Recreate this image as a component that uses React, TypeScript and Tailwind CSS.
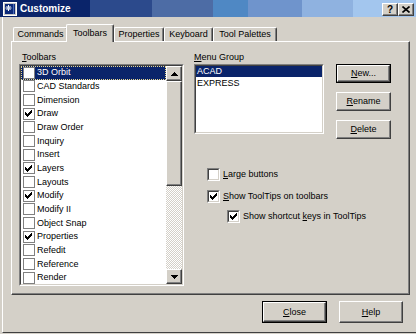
import React from "react";

const items: [string, boolean][] = [
  ["3D Orbit", false],
  ["CAD Standards", false],
  ["Dimension", false],
  ["Draw", true],
  ["Draw Order", false],
  ["Inquiry", false],
  ["Insert", false],
  ["Layers", true],
  ["Layouts", false],
  ["Modify", true],
  ["Modify II", false],
  ["Object Snap", false],
  ["Properties", true],
  ["Refedit", false],
  ["Reference", false],
  ["Render", false],
];

function CheckMark() {
  return (
    <svg width="8" height="7" viewBox="0 0 8 7">
      <path d="M0 2h1v1h1v1h1V3h1V2h1V1h1V0h1v3H6v1H5v1H4v1H3v1H2V6H1V5H0z" fill="#000" />
    </svg>
  );
}

function TitleIcon() {
  return (
    <svg width="14" height="14" viewBox="0 0 14 14">
      <rect x="0.5" y="0.5" width="13" height="13" fill="#c8c8c8" stroke="#ffffff" />
      <rect x="2" y="2" width="10" height="10" fill="#0c2a7a" />
      <rect x="10" y="2" width="1" height="10" fill="#4a6ab8" />
      <path d="M5.5 3v6M2.5 6h6M3.5 4l4 4M7.5 4l-4 4" stroke="#ffffff" strokeWidth="1" />
      <rect x="5" y="5.5" width="1" height="1" fill="#a0c0ff" />
    </svg>
  );
}

function UpArrow() {
  return (
    <svg width="7" height="4" viewBox="0 0 7 4">
      <path d="M3 0h1v1h1v1h1v1h1v1H0V3h1V2h1V1h1z" fill="#000" />
    </svg>
  );
}

function DownArrow() {
  return (
    <svg width="7" height="4" viewBox="0 0 7 4">
      <path d="M0 0h7v1H6v1H5v1H4v1H3V3H2V2H1V1H0z" fill="#000" />
    </svg>
  );
}

function Btn({ children, w, h, def }: { children: React.ReactNode; w: string; h: string; def?: boolean }) {
  if (def) {
    return (
      <div className={`${w} ${h} border border-black flex`}>
        <div className="flex-1 flex items-center justify-center border border-white border-r-[#404040] border-b-[#404040] shadow-[inset_-1px_-1px_#808080]">
          {children}
        </div>
      </div>
    );
  }
  return (
    <div
      className={`${w} ${h} flex items-center justify-center border border-white border-r-[#404040] border-b-[#404040] shadow-[inset_-1px_-1px_#808080]`}
    >
      {children}
    </div>
  );
}

function SunkenBox({ checked }: { checked?: boolean }) {
  return (
    <div className="w-[13px] h-[13px] shrink-0 border border-[#808080] border-r-white border-b-white flex">
      <div className="flex-1 bg-white border border-[#404040] border-r-[#d4d0c8] border-b-[#d4d0c8] flex items-center justify-center">
        {checked && <CheckMark />}
      </div>
    </div>
  );
}

function ListCheck({ checked }: { checked: boolean }) {
  return (
    <div className="w-[12px] h-[12px] shrink-0 bg-white border border-[#808080] flex items-center justify-center">
      {checked && <CheckMark />}
    </div>
  );
}

export default function App() {
  return (
    <div className="w-[416px] h-[334px] bg-[#d4d0c8] flex flex-col overflow-hidden font-['Liberation_Sans',Arial,sans-serif] text-[9px] leading-none text-black select-none">
      {/* Title bar */}
      <div className="h-[17px] shrink-0 flex items-center pl-[3px] pr-[2px] bg-[linear-gradient(to_right,#0a246a_0px,#0a246a_90px,#2c4a8c_90px,#2c4a8c_152px,#4d6ca5_152px,#4d6ca5_213px,#4f88c4_213px,#4f88c4_248px,#6f94cc_248px,#6f94cc_302px,#8fb2e0_302px,#8fb2e0_353px,#a3c6ee_353px)]">
        <TitleIcon />
        <span className="ml-[3px] text-white font-bold text-[10px]">Customize</span>
        <div className="ml-auto flex self-start mt-[3px]">
          <div className="w-[16px] h-[13px] bg-[#d4d0c8] flex items-center justify-center border border-white border-r-[#404040] border-b-[#404040] shadow-[inset_-1px_-1px_#808080] font-bold text-[10px]">
            ?
          </div>
          <div className="w-[16px] h-[13px] bg-[#d4d0c8] flex items-center justify-center border border-white border-r-[#404040] border-b-[#404040] shadow-[inset_-1px_-1px_#808080]">
            <svg width="8" height="7" viewBox="0 0 8 7">
              <path d="M0.5 0.5l7 6M7.5 0.5l-7 6" stroke="#000" strokeWidth="1.6" />
            </svg>
          </div>
        </div>
      </div>

      {/* Body */}
      <div className="flex-1 mb-[1px] ml-[2px] border-l border-white border-b border-b-[#404040] pl-[8px] flex flex-col">
        {/* Tabs */}
        <div className="mt-[7px] h-[17px] ml-[2px] flex items-end">
          <div className="w-[55px] h-[14px] flex items-center justify-center border border-white border-b-0 border-r-[#404040] shadow-[inset_-1px_0_#808080] rounded-t-[2px]">
            Commands
          </div>
          <div className="relative z-10 -ml-[2px] -mb-px w-[48px] h-[18px] bg-[#d4d0c8] flex items-start pt-[4px] justify-center border border-white border-b-0 border-r-[#404040] shadow-[inset_-1px_0_#808080] rounded-t-[2px]">
            Toolbars
          </div>
          <div className="w-[50px] h-[14px] flex items-center justify-center border border-white border-b-0 border-r-[#404040] shadow-[inset_-1px_0_#808080] rounded-t-[2px]">
            Properties
          </div>
          <div className="w-[49px] h-[14px] flex items-center justify-center border border-white border-b-0 border-r-[#404040] shadow-[inset_-1px_0_#808080] rounded-t-[2px]">
            Keyboard
          </div>
          <div className="w-[64px] h-[14px] flex items-center justify-center border border-white border-b-0 border-r-[#404040] shadow-[inset_-1px_0_#808080] rounded-t-[2px]">
            Tool Palettes
          </div>
        </div>

        {/* Panel */}
        <div className="w-[399px] h-[254px] border border-white border-r-[#404040] border-b-[#404040] shadow-[inset_-1px_-1px_#808080] flex pt-[8px] pl-[7px]">
          {/* Left column */}
          <div className="w-[165px] flex flex-col">
            <div className="h-[14px] pl-[3px] flex items-center">
              <span>
                <u>T</u>oolbars
              </span>
            </div>
            <div className="w-[165px] h-[222px] border border-[#808080] border-r-white border-b-white flex">
              <div className="flex-1 bg-white border border-[#404040] border-r-[#d4d0c8] border-b-[#d4d0c8] flex overflow-hidden">
                <div className="flex-1 flex flex-col overflow-hidden">
                  {items.map(([name, checked], i) => (
                    <div
                      key={name}
                      className={
                        i === 0
                          ? "h-[13.67px] shrink-0 flex items-center pl-[2px] bg-[#0a246a] text-white outline-1 outline-dotted outline-[#e8d890] -outline-offset-1"
                          : "h-[13.67px] shrink-0 flex items-center pl-[2px]"
                      }
                    >
                      <ListCheck checked={checked} />
                      <span className="ml-[2px] whitespace-nowrap">{name}</span>
                    </div>
                  ))}
                </div>
                <div className="w-[16px] flex flex-col">
                  <div className="h-[15px] bg-[#d4d0c8] flex items-center justify-center border border-white border-r-[#404040] border-b-[#404040] shadow-[inset_-1px_-1px_#808080]">
                    <UpArrow />
                  </div>
                  <div className="h-[105px] bg-[#d4d0c8] border border-white border-r-[#404040] border-b-[#404040] shadow-[inset_-1px_-1px_#808080]" />
                  <div className="flex-1 bg-[repeating-conic-gradient(#d4d0c8_0%_25%,#ffffff_0%_50%)] bg-size-[2px_2px]" />
                  <div className="h-[15px] bg-[#d4d0c8] flex items-center justify-center border border-white border-r-[#404040] border-b-[#404040] shadow-[inset_-1px_-1px_#808080]">
                    <DownArrow />
                  </div>
                </div>
              </div>
            </div>
          </div>

          {/* Right column */}
          <div className="ml-[10px] flex flex-col">
            <div className="h-[14px] flex items-center">
              <span>
                <u>M</u>enu Group
              </span>
            </div>
            <div className="flex items-start">
              <div className="w-[130px] h-[70px] border border-[#808080] border-r-white border-b-white flex">
                <div className="flex-1 bg-white border border-[#404040] border-r-[#d4d0c8] border-b-[#d4d0c8] flex flex-col">
                  <div className="h-[11px] flex items-center pl-[1px] bg-[#0a246a] text-white">ACAD</div>
                  <div className="h-[12px] flex items-center pl-[1px]">EXPRESS</div>
                </div>
              </div>
              <div className="ml-[12px] flex flex-col gap-[9px]">
                <Btn w="w-[55px]" h="h-[19px]" def>
                  <span>
                    <u>N</u>ew...
                  </span>
                </Btn>
                <Btn w="w-[55px]" h="h-[19px]">
                  <span>
                    <u>R</u>ename
                  </span>
                </Btn>
                <Btn w="w-[55px]" h="h-[19px]">
                  <span>
                    <u>D</u>elete
                  </span>
                </Btn>
              </div>
            </div>

            <div className="mt-[29px] ml-[13px] h-[13px] flex items-center">
              <SunkenBox />
              <span className="ml-[3px]">
                <u>L</u>arge buttons
              </span>
            </div>
            <div className="mt-[9px] ml-[13px] h-[13px] flex items-center">
              <SunkenBox checked />
              <span className="ml-[3px]">
                <u>S</u>how ToolTips on toolbars
              </span>
            </div>
            <div className="mt-[7px] ml-[33px] h-[13px] flex items-center">
              <SunkenBox checked />
              <span className="ml-[3px]">
                Show shortcut <u>k</u>eys in ToolTips
              </span>
            </div>
          </div>
        </div>

        {/* Bottom buttons */}
        <div className="mt-[6px] flex">
          <div className="ml-[251px]">
            <Btn w="w-[65px]" h="h-[22px]" def>
              <span>
                <u>C</u>lose
              </span>
            </Btn>
          </div>
          <div className="ml-[12px]">
            <Btn w="w-[64px]" h="h-[22px]">
              <span>
                <u>H</u>elp
              </span>
            </Btn>
          </div>
        </div>
      </div>
    </div>
  );
}
